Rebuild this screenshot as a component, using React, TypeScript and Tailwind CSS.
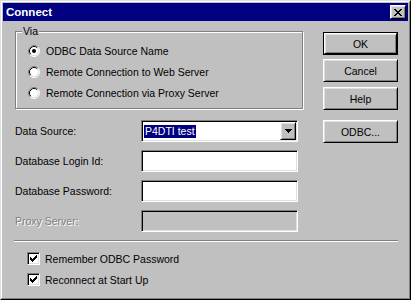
import React from 'react';

const raised =
  'border border-t-white border-l-white border-r-black border-b-black shadow-[inset_1px_1px_0_#dfdfdf,inset_-1px_-1px_0_#808080]';
const sunken =
  'border border-t-[#808080] border-l-[#808080] border-r-white border-b-white shadow-[inset_1px_1px_0_#000,inset_-1px_-1px_0_#dfdfdf]';

function CloseGlyph() {
  return (
    <svg width="8" height="7" viewBox="0 0 8 7" shapeRendering="crispEdges">
      <path
        fill="#000"
        d="M0 0h2v1H0z M6 0h2v1H6z M1 1h2v1H1z M5 1h2v1H5z M2 2h4v1H2z M3 3h2v1H3z M2 4h4v1H2z M1 5h2v1H1z M5 5h2v1H5z M0 6h2v1H0z M6 6h2v1H6z"
      />
    </svg>
  );
}

function Radio({ checked }: { checked?: boolean }) {
  return (
    <svg width="12" height="12" viewBox="0 0 12 12" className="shrink-0">
      <circle cx="6" cy="6" r="5" fill="#fff" />
      <path d="M2.11 9.89A5.5 5.5 0 0 1 9.89 2.11" fill="none" stroke="#808080" strokeWidth="1" />
      <path d="M9.89 2.11A5.5 5.5 0 0 1 2.11 9.89" fill="none" stroke="#fff" strokeWidth="1" />
      <path d="M2.82 9.18A4.5 4.5 0 0 1 9.18 2.82" fill="none" stroke="#000" strokeWidth="1" />
      <path d="M9.18 2.82A4.5 4.5 0 0 1 2.82 9.18" fill="none" stroke="#dfdfdf" strokeWidth="1" />
      {checked && <circle cx="6" cy="6" r="2" fill="#000" />}
    </svg>
  );
}

function Checkbox() {
  return (
    <div className={`w-[13px] h-[13px] bg-white shrink-0 flex items-center justify-center ${sunken}`}>
      <svg width="7" height="7" viewBox="0 0 7 7" shapeRendering="crispEdges">
        <path
          fill="#000"
          d="M6 0h1v1H6z M5 1h2v1H5z M0 2h1v1H0z M4 2h3v1H4z M0 3h2v1H0z M3 3h3v1H3z M0 4h5v1H0z M1 5h3v1H1z M2 6h1v1H2z"
        />
      </svg>
    </div>
  );
}

function Button({ label, isDefault }: { label: string; isDefault?: boolean }) {
  const inner = (
    <div className={`h-full w-full flex items-center justify-center bg-[#c0c0c0] ${raised}`}>
      {label}
    </div>
  );
  if (isDefault) {
    return <div className="h-[23px] w-[75px] border border-black">{inner}</div>;
  }
  return <div className="h-[23px] w-[75px]">{inner}</div>;
}

function Field({ label, children, disabled }: { label: string; children: React.ReactNode; disabled?: boolean }) {
  return (
    <div className="flex items-center h-[22px]">
      <span
        className={`w-[126px] ${disabled ? 'text-[#808080] [text-shadow:1px_1px_0_#fff]' : ''}`}
      >
        {label}
      </span>
      {children}
    </div>
  );
}

export default function App() {
  return (
    <div className="w-[411px] h-[300px] bg-[#c0c0c0] border border-t-[#dfdfdf] border-l-[#dfdfdf] border-r-black border-b-black font-['Liberation_Sans',Arial,sans-serif] text-[10.5px] leading-[12px] text-black">
      <div className="h-full border border-t-white border-l-white border-r-[#808080] border-b-[#808080] p-px flex flex-col">
        {/* title bar */}
        <div className="h-[18px] bg-[#000080] flex items-center pl-[3px] pr-[2px]">
          <span className="text-white font-bold text-[11.5px]">Connect</span>
          <div className={`ml-auto w-[16px] h-[14px] bg-[#c0c0c0] flex items-center justify-center ${raised}`}>
            <CloseGlyph />
          </div>
        </div>

        <div className="flex">
          {/* left column */}
          <div className="ml-[12px] mt-[10px] w-[288px] flex flex-col">
            <div className="relative h-[78px] border border-[#808080] shadow-[inset_1px_1px_0_#fff,1px_1px_0_#fff] pt-[8px] pl-[12px]">
              <span className="absolute -top-[7px] left-[6px] px-px bg-[#c0c0c0]">Via</span>
              <div className="flex items-center gap-[6px] h-[21px]">
                <Radio checked />
                <span>ODBC Data Source Name</span>
              </div>
              <div className="flex items-center gap-[6px] h-[21px]">
                <Radio />
                <span>Remote Connection to Web Server</span>
              </div>
              <div className="flex items-center gap-[6px] h-[21px]">
                <Radio />
                <span>Remote Connection via Proxy Server</span>
              </div>
            </div>

            <div className="mt-[11px] flex flex-col gap-[8px]">
              <Field label="Data Source:">
                <div className={`w-[157px] h-[22px] bg-white flex items-center p-px ${sunken}`}>
                  <span className="ml-px h-[13px] leading-[13px] bg-[#000080] text-white px-px">P4DTI test</span>
                  <div className={`ml-auto w-[16px] h-full bg-[#c0c0c0] flex items-center justify-center ${raised}`}>
                    <svg width="7" height="4" viewBox="0 0 7 4" shapeRendering="crispEdges">
                      <path fill="#000" d="M0 0h7v1H0z M1 1h5v1H1z M2 2h3v1H2z M3 3h1v1H3z" />
                    </svg>
                  </div>
                </div>
              </Field>
              <Field label="Database Login Id:">
                <div className={`w-[157px] h-[22px] bg-white ${sunken}`} />
              </Field>
              <Field label="Database Password:">
                <div className={`w-[157px] h-[22px] bg-white ${sunken}`} />
              </Field>
              <Field label="Proxy Server:" disabled>
                <div className={`w-[157px] h-[22px] bg-[#c0c0c0] ${sunken}`} />
              </Field>
            </div>
          </div>

          {/* right column */}
          <div className="ml-[20px] mt-[11px] flex flex-col">
            <Button label="OK" isDefault />
            <div className="mt-[4px]">
              <Button label="Cancel" />
            </div>
            <div className="mt-[5px]">
              <Button label="Help" />
            </div>
            <div className="mt-[10px]">
              <Button label="ODBC..." />
            </div>
          </div>
        </div>

        <div className="ml-[11px] mt-[8px] w-[384px] h-[2px] border-t border-t-[#808080] border-b border-b-white" />

        <div className="ml-[24px] mt-[6px] flex flex-col">
          <div className="flex items-center gap-[5px] h-[21px]">
            <Checkbox />
            <span>Remember ODBC Password</span>
          </div>
          <div className="flex items-center gap-[5px] h-[21px]">
            <Checkbox />
            <span>Reconnect at Start Up</span>
          </div>
        </div>
      </div>
    </div>
  );
}
